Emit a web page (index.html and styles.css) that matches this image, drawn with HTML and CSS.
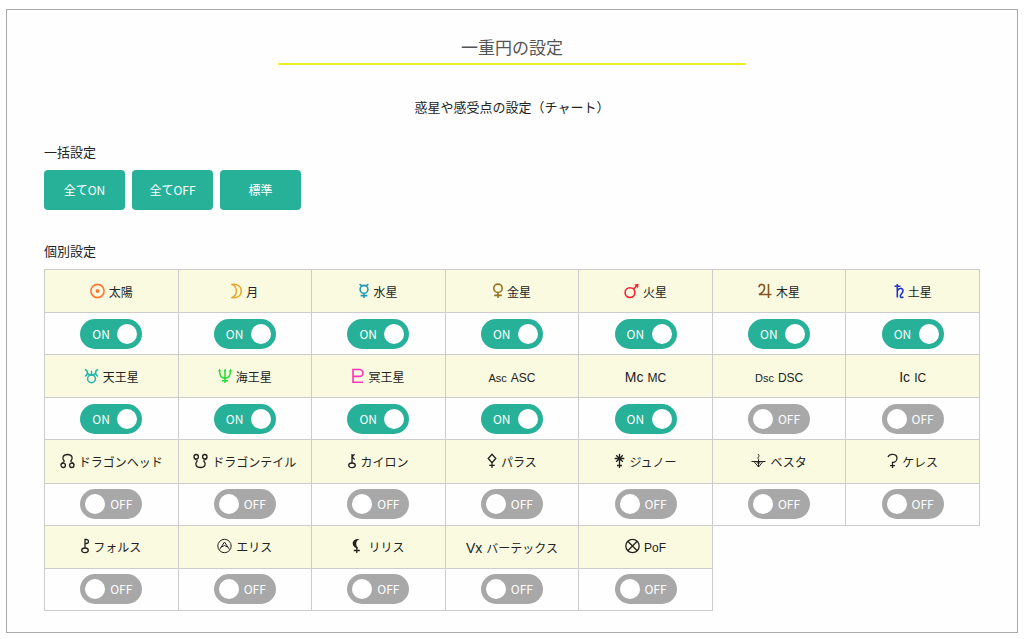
FILE: index.html
```html
<!DOCTYPE html>
<html lang="ja">
<head>
  <meta charset="UTF-8">
  <meta name="viewport" content="width=device-width, initial-scale=1.0">
  <title>一重円の設定</title>
  <link rel="stylesheet" href="styles.css">
</head>
<body>
  <main class="panel">
    <h1>一重円の設定</h1>
    <p class="lead">惑星や感受点の設定（チャート）</p>

    <h2>一括設定</h2>
    <div class="buttons">
      <button type="button">全てON</button>
      <button type="button">全てOFF</button>
      <button type="button">標準</button>
    </div>

    <h2>個別設定</h2>
    <table class="points">
      <tr>
        <th><svg class="sun" width="15" height="16" viewBox="0 0 15 16"><circle cx="7.5" cy="8" r="6.6"/><circle class="fill" cx="7.5" cy="8" r="1.9"/></svg>太陽</th>
        <th><svg class="moon" width="11" height="16" viewBox="0 0 11 16"><path d="M1 1.4C7 .2 10.3 4 10.3 8S7 15.8 1 14.6C4 13.2 5.4 11 5.4 8S4 2.8 1 1.4z"/></svg>月</th>
        <th><svg class="mercury" width="10" height="16" viewBox="0 0 10 16"><circle cx="5" cy="6.4" r="3.9"/><path d="M.8 1q.5 1.500 2.400 1.500h3.600Q8.700 2.500 9.200 1M5 10.200V15M1.600 12.600h6.800"/></svg>水星</th>
        <th><svg class="venus" width="10" height="16" viewBox="0 0 10 16"><circle cx="5" cy="5.300" r="4.200"/><path d="M5 9.500V15M1.200 12.400h7.600"/></svg>金星</th>
        <th><svg class="mars" width="15" height="16" viewBox="0 0 15 16"><circle cx="6" cy="9.600" r="4.900"/><path d="M9.500 6l3-3"/><path class="fill" d="M10.200 1.400l4.400-.6-.6 4.400z"/></svg>火星</th>
        <th><svg class="jupiter" width="14" height="16" viewBox="0 0 14 16"><path d="M1 4.200C1.200 .5 6.500.4 6.500 4.500c0 3-2 5.300-5.500 7h12.500M10.500 1v14"/></svg>木星</th>
        <th><svg class="saturn" width="10" height="16" viewBox="0 0 10 16"><path d="M.5 3.200h6M3.300 1v13.500M3.300 8C4.500 4.600 9 4.600 9 7.800c0 2.500-2.700 3.300-2.700 5.200 0 1.700 1.700 1.900 3 1"/></svg>土星</th>
      </tr>
      <tr>
        <td><label class="switch"><input type="checkbox" aria-label="太陽" checked><span class="on">ON</span><span class="off">OFF</span></label></td>
        <td><label class="switch"><input type="checkbox" aria-label="月" checked><span class="on">ON</span><span class="off">OFF</span></label></td>
        <td><label class="switch"><input type="checkbox" aria-label="水星" checked><span class="on">ON</span><span class="off">OFF</span></label></td>
        <td><label class="switch"><input type="checkbox" aria-label="金星" checked><span class="on">ON</span><span class="off">OFF</span></label></td>
        <td><label class="switch"><input type="checkbox" aria-label="火星" checked><span class="on">ON</span><span class="off">OFF</span></label></td>
        <td><label class="switch"><input type="checkbox" aria-label="木星" checked><span class="on">ON</span><span class="off">OFF</span></label></td>
        <td><label class="switch"><input type="checkbox" aria-label="土星" checked><span class="on">ON</span><span class="off">OFF</span></label></td>
      </tr>
      <tr>
        <th><svg class="uranus" width="15" height="16" viewBox="0 0 15 16"><circle cx="7.500" cy="10.800" r="3.900"/><path d="M.8 1.500C4 2 4.500 6.500 1 8.300M14.200 1.500C11 2 10.500 6.500 14 8.300M3.400 5.200l2.300 1.600h3.600l2.300-1.600M7.500 2.800v4"/></svg>天王星</th>
        <th><svg class="neptune" width="14" height="16" viewBox="0 0 14 16"><path d="M1.500 2.500C1.500 7 3 10.300 7 10.300S12.500 7 12.500 2.500M7 2v13M4 12.700h6"/><path class="fill" d="M0 3.300L1.500.8 3 3.300zM5.500 3.300L7 .8l1.500 2.500zM11 3.300L12.500.8 14 3.300z"/></svg>海王星</th>
        <th><svg class="pluto" width="12" height="16" viewBox="0 0 12 16"><path d="M11 14.300H1V1.500h6.500a3.400 3.400 0 010 6.900H1"/></svg>冥王星</th>
        <th><span class="abbr small">Asc</span>ASC</th>
        <th><span class="abbr">Mc</span>MC</th>
        <th><span class="abbr small">Dsc</span>DSC</th>
        <th><span class="abbr">Ic</span>IC</th>
      </tr>
      <tr>
        <td><label class="switch"><input type="checkbox" aria-label="天王星" checked><span class="on">ON</span><span class="off">OFF</span></label></td>
        <td><label class="switch"><input type="checkbox" aria-label="海王星" checked><span class="on">ON</span><span class="off">OFF</span></label></td>
        <td><label class="switch"><input type="checkbox" aria-label="冥王星" checked><span class="on">ON</span><span class="off">OFF</span></label></td>
        <td><label class="switch"><input type="checkbox" aria-label="ASC" checked><span class="on">ON</span><span class="off">OFF</span></label></td>
        <td><label class="switch"><input type="checkbox" aria-label="MC" checked><span class="on">ON</span><span class="off">OFF</span></label></td>
        <td><label class="switch"><input type="checkbox" aria-label="DSC"><span class="on">ON</span><span class="off">OFF</span></label></td>
        <td><label class="switch"><input type="checkbox" aria-label="IC"><span class="on">ON</span><span class="off">OFF</span></label></td>
      </tr>
      <tr>
        <th><svg width="15" height="16" viewBox="0 0 15 16"><circle cx="3.200" cy="12.300" r="2.200"/><circle cx="11.800" cy="12.300" r="2.200"/><path d="M1.100 11.500C1.300 8.800 4.600 9.600 4.200 8 1.800 5.500 2.500 1.500 7.500 1.500s5.700 4 3.300 6.500c-.4 1.600 2.900.8 3.100 3.500"/></svg>ドラゴンヘッド</th>
        <th><svg width="15" height="16" viewBox="0 0 15 16"><circle cx="3.200" cy="3.700" r="2.200"/><circle cx="11.800" cy="3.700" r="2.200"/><path d="M1.100 4.500C1.300 7.200 4.600 6.400 4.200 8c-2.400 2.500-1.700 6.500 3.300 6.500s5.700-4 3.300-6.500c-.4-1.600 2.900-.8 3.100-3.500"/></svg>ドラゴンテイル</th>
        <th><svg width="8" height="16" viewBox="0 0 8 16"><ellipse cx="4" cy="12.300" rx="3.300" ry="2.300"/><path d="M4 1v9M6.500 1.300L4 4l2.700 2.400"/></svg>カイロン</th>
        <th><svg width="10" height="16" viewBox="0 0 10 16"><path d="M5 1.200l3.800 4.300L5 9.800 1.200 5.500zM5 9.800V15M2.200 12.300h5.600"/></svg>パラス</th>
        <th><svg width="11" height="16" viewBox="0 0 11 16"><path d="M5.500 .8V15M.7 5.500h9.600M2.200 2.200l6.600 6.600M8.800 2.200L2.200 8.800M3 12.500h5"/></svg>ジュノー</th>
        <th><svg class="vesta" width="15" height="16" viewBox="0 0 15 16"><path d="M.5 8.500h14M7.500 6.500v7.500M7.700 6.500C5.500 4.500 9.500 3.500 7.200 1.200M3 8.500l4.500 5.500L12 8.500M5.300 8.500l2.200 2.500 2.200-2.500"/></svg>ベスタ</th>
        <th><svg width="11" height="16" viewBox="0 0 11 16"><path d="M1 4C2.500.3 10 .5 10 5.300c0 3-2.500 4.200-4.500 4.200V15M3 12.600h5"/></svg>ケレス</th>
      </tr>
      <tr>
        <td><label class="switch"><input type="checkbox" aria-label="ドラゴンヘッド"><span class="on">ON</span><span class="off">OFF</span></label></td>
        <td><label class="switch"><input type="checkbox" aria-label="ドラゴンテイル"><span class="on">ON</span><span class="off">OFF</span></label></td>
        <td><label class="switch"><input type="checkbox" aria-label="カイロン"><span class="on">ON</span><span class="off">OFF</span></label></td>
        <td><label class="switch"><input type="checkbox" aria-label="パラス"><span class="on">ON</span><span class="off">OFF</span></label></td>
        <td><label class="switch"><input type="checkbox" aria-label="ジュノー"><span class="on">ON</span><span class="off">OFF</span></label></td>
        <td><label class="switch"><input type="checkbox" aria-label="ベスタ"><span class="on">ON</span><span class="off">OFF</span></label></td>
        <td><label class="switch"><input type="checkbox" aria-label="ケレス"><span class="on">ON</span><span class="off">OFF</span></label></td>
      </tr>
      <tr>
        <th><svg width="8" height="16" viewBox="0 0 8 16"><ellipse cx="4" cy="12.300" rx="3.300" ry="2.300"/><path d="M4 10V1.500h1.500a2 2 0 010 4H4"/></svg>フォルス</th>
        <th><svg class="eris" width="15" height="16" viewBox="0 0 15 16"><circle cx="7.500" cy="8" r="6.700"/><path d="M2.500 11.500l5-7.500 5 7.500M4.500 9l3-1.500 3 1.500"/></svg>エリス</th>
        <th><svg class="lilith" width="8" height="16" viewBox="0 0 8 16"><path class="fill" d="M7.500 1C-1.200 .3-1.600 9.500 6.500 10.500 3.200 7 3.400 3.200 7.500 1z"/><path d="M4.800 9v6M1.800 12.500h6"/></svg>リリス</th>
        <th><span class="abbr">Vx</span>バーテックス</th>
        <th><svg width="15" height="16" viewBox="0 0 15 16"><circle cx="7.500" cy="8" r="6.700"/><path d="M2.800 3.300l9.400 9.400M12.200 3.300l-9.400 9.400"/></svg>PoF</th>
      </tr>
      <tr>
        <td><label class="switch"><input type="checkbox" aria-label="フォルス"><span class="on">ON</span><span class="off">OFF</span></label></td>
        <td><label class="switch"><input type="checkbox" aria-label="エリス"><span class="on">ON</span><span class="off">OFF</span></label></td>
        <td><label class="switch"><input type="checkbox" aria-label="リリス"><span class="on">ON</span><span class="off">OFF</span></label></td>
        <td><label class="switch"><input type="checkbox" aria-label="バーテックス"><span class="on">ON</span><span class="off">OFF</span></label></td>
        <td><label class="switch"><input type="checkbox" aria-label="PoF"><span class="on">ON</span><span class="off">OFF</span></label></td>
      </tr>
    </table>
  </main>
</body>
</html>
```
FILE: styles.css
```css
* {
  box-sizing: border-box;
}
body {
  margin: 9px 6px 6px;
  background: #fff;
  color: #222;
  font-family: "Noto Sans CJK JP", sans-serif;
  font-size: 13px;
  line-height: 20px;
}
.panel {
  padding: 24px 37px 21px;
  border: 1px solid #aaa;
  background: #fefefe;
}
h1 {
  width: 50%;
  margin: 0 auto;
  padding-bottom: 3px;
  border-bottom: 2px solid #eeee22;
  color: #555;
  font-size: 17px;
  font-weight: normal;
  line-height: 26px;
  text-align: center;
}
.lead {
  margin: 32px 0 25px;
  text-align: center;
}
h2 {
  margin: 0 0 8px;
  font-size: 13px;
  font-weight: normal;
}
.buttons {
  display: flex;
  gap: 7px;
  margin-bottom: 31px;
}
.buttons button {
  width: 81px;
  height: 40px;
  padding: 0 0 2px;
  border: none;
  border-radius: 4px;
  background: #27b198;
  color: #fff;
  font-family: inherit;
  font-size: 12px;
  cursor: pointer;
}
.points {
  width: 100%;
  height: 342px;
  border-collapse: collapse;
  table-layout: fixed;
}
.points th,
.points td {
  padding: 0;
  border: 1px solid #ccc;
  text-align: center;
  vertical-align: middle;
}
.points th {
  height: 43px;
  padding-top: 3px;
  background: #fafae0;
  font-family: "Liberation Sans", "Noto Sans CJK JP", sans-serif;
  font-size: 12px;
  font-weight: normal;
  white-space: nowrap;
}
.points td {
  height: 42px;
}

/* 天体の記号 */
.points svg {
  margin-right: 4px;
  vertical-align: -2px;
  fill: none;
  stroke: currentColor;
  stroke-width: 1.3;
}
.points svg .fill {
  fill: currentColor;
  stroke: none;
}
.points .sun { color: #ff7733; stroke-width: 1.6; }
.points .moon { color: #e8a628; stroke-width: 1.5; }
.points .mercury { color: #2299bb; stroke-width: 1.6; }
.points .venus { color: #927422; stroke-width: 1.6; }
.points .mars { color: #ff1f33; stroke-width: 1.6; }
.points .jupiter { color: #8a5522; stroke-width: 1.6; }
.points .saturn { color: #2233cc; stroke-width: 1.6; }
.points .uranus { color: #22b5aa; stroke-width: 1.5; }
.points .neptune { color: #22dd33; stroke-width: 1.5; }
.points .pluto { color: #ff33bb; stroke-width: 1.6; }
.points .vesta,
.points .eris { stroke-width: 1; }
.points .lilith { margin-right: 8px; }
.abbr {
  margin-right: 4px;
  font-size: 14px;
}
.abbr.small {
  font-size: 11px;
}

/* ON/OFF スイッチ */
.switch {
  display: flex;
  align-items: center;
  justify-content: space-between;
  width: 62px;
  height: 30px;
  margin: 0 auto;
  padding: 0 10px 0 5px;
  border-radius: 15px;
  background: #a8a8a8;
  color: #fff;
  font-size: 12px;
  cursor: pointer;
}
.switch input {
  appearance: none;
  width: 20px;
  height: 20px;
  margin: 0;
  border-radius: 50%;
  background: #fff;
  cursor: pointer;
}
.switch .on {
  display: none;
}
.switch:has(input:checked) {
  flex-direction: row-reverse;
  padding: 0 5px 0 12px;
  background: #27b198;
}
.switch input:checked ~ .on {
  display: inline;
}
.switch input:checked ~ .off {
  display: none;
}
```
